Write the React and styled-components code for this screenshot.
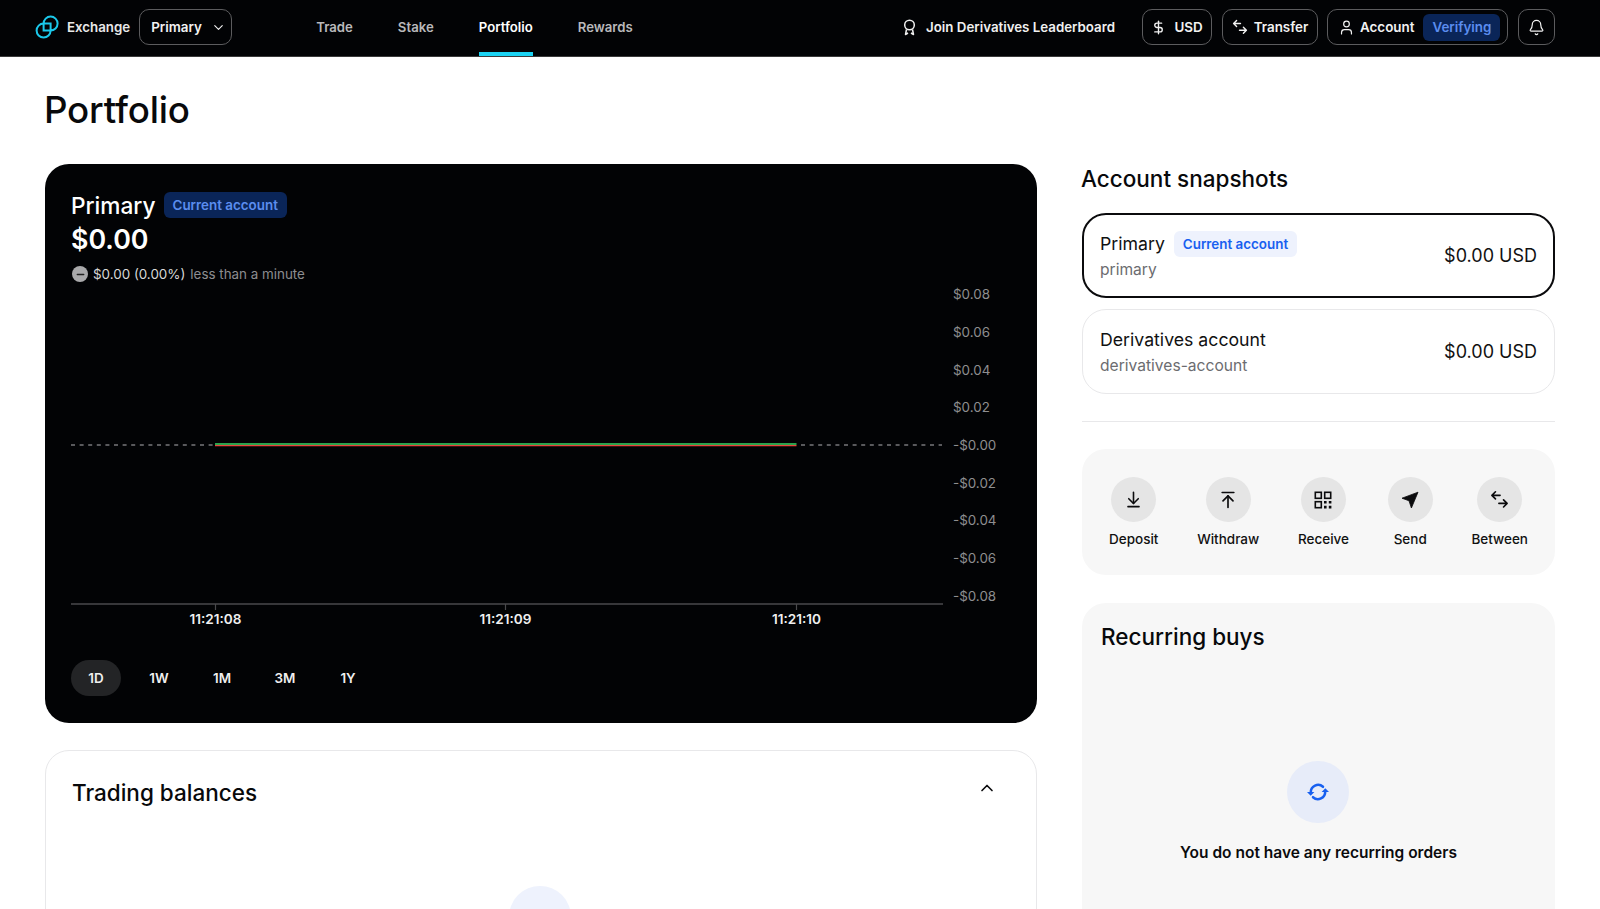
import React from 'react';
import styled, { createGlobalStyle } from 'styled-components';
import { ChevronDown, ChevronUp, Bell, User, DollarSign, ArrowDownToLine, ArrowUpToLine, Minus } from 'lucide-react';

const Global = createGlobalStyle`
  html, body { margin: 0; padding: 0; height: 100%; overflow: hidden; background: #fff; }
  body { font-family: Inter, "Liberation Sans", sans-serif; color: #0b0b0d; -webkit-font-smoothing: antialiased; }
  * { box-sizing: border-box; }
  svg { flex: none; }
`;

const Page = styled.div`height: 909px; overflow: hidden;`;
const Nav = styled.header`
  height: 57px; background: #020305; color: #fff; display: flex; align-items: stretch;
  justify-content: space-between; padding: 0 45px 0 35px; border-bottom: 1px solid #3a3a3a;
`;
const NavSide = styled.div`display: flex; align-items: center; padding-bottom: 2px;`;
const Brand = styled.div`display: flex; align-items: center; gap: 8px; font-size: 13.3px; font-weight: 600; color: #e8e8e8; margin-right: 9px;`;
const Outline = styled.button`
  height: 36px; padding: ${p => p.$pad || '0 10px'}; margin-left: ${p => p.$ml || '10px'}; background: transparent; color: #f2f2f2;
  border: 1px solid #5c5c5e; border-radius: 10px; display: flex; align-items: center; gap: ${p => p.$gap || '6px'};
  font: 600 13.4px Inter, sans-serif; width: ${p => p.$w || 'auto'}; justify-content: ${p => p.$jc || 'flex-start'};
`;
const Links = styled.nav`display: flex; gap: 45px; margin-left: 84px; align-self: stretch; margin-bottom: -2px;`;
const NavLink = styled.a`
  display: flex; align-items: center; font-size: 13.2px; font-weight: 600; padding-bottom: 2px;
  color: ${p => p.$active ? '#fff' : '#b9b9bb'}; position: relative;
  &::after { content: ''; display: ${p => p.$active ? 'block' : 'none'}; position: absolute; left: 0; right: 0; bottom: 0; height: 4px; background: #1bd3f3; }
`;
const Join = styled.div`display: flex; align-items: center; gap: 10px; font-size: 13.3px; font-weight: 600; color: #f0f0f0; margin-right: 17px;`;
const VerifyBadge = styled.span`
  height: 27px; padding: 0 9px; border-radius: 6px; background: #0a2558; color: #5b8def; display: flex; align-items: center; margin-left: 4px;
`;

const Main = styled.main`padding: 0 45px;`;
const Title = styled.h1`margin: 0 0 0 -1px; height: 107px; display: flex; align-items: center; font-size: 36.7px; font-weight: 500; letter-spacing: -0.2px; color: #08090b; padding-bottom: 2px;`;
const Columns = styled.div`display: grid; grid-template-columns: 992px 473px; gap: 45px;`;
const Col = styled.div`display: flex; flex-direction: column;`;

const ChartCard = styled.section`
  height: 559px; background: #020305; border-radius: 24px; color: #fff; padding: 27px 27px 27px 26px; display: flex; flex-direction: column;
`;
const NameRow = styled.div`display: flex; align-items: center; gap: 8px; height: 28px;`;
const CardName = styled.div`font-size: 22.7px; font-weight: 500;`;
const Badge = styled.span`
  height: 26px; padding: 0 9px; border-radius: 6px; display: inline-flex; align-items: center; font-size: 13.4px; font-weight: 600; white-space: nowrap;
  background: ${p => p.$dark ? '#0a2558' : '#eef2fd'}; color: ${p => p.$dark ? '#5b8def' : '#1860f0'};
`;
const Amount = styled.div`font-size: 26.8px; font-weight: 600; line-height: 34px; margin-top: 3px;`;
const Delta = styled.div`display: flex; align-items: center; font-size: 13.4px; margin-top: 9px; color: #d8d8d8; height: 18px;`;
const DeltaDot = styled.span`width: 16px; height: 16px; border-radius: 50%; background: #a9a9ab; color: #222; display: flex; align-items: center; justify-content: center; margin: 0 5px 0 1px;`;
const Muted = styled.span`color: #8d8d90; margin-left: 5px;`;
const ChartSvg = styled.svg`display: block; margin-top: 2px; flex: none;`;
const Ranges = styled.div`display: flex; gap: 13px; margin-top: auto;`;
const Range = styled.button`
  width: 50px; height: 36px; border: 0; border-radius: 18px; background: ${p => p.$active ? '#232426' : 'transparent'};
  color: #efefef; font: 600 13.4px Inter, sans-serif; padding: 0;
`;

const BalCard = styled.section`
  margin-top: 27px; height: 260px; border: 1px solid #e8e8ea; border-radius: 24px; padding: 27px 27px 27px 26px; position: relative;
`;
const BalHead = styled.div`display: flex; justify-content: space-between; align-items: flex-start; height: 30px;`;
const H2 = styled.h2`margin: 0; font-size: 22.5px; font-weight: 500; line-height: 30px; color: #08090b;`;
const BalCircle = styled.div`width: 62px; height: 62px; border-radius: 50%; background: #eef2fd; margin: 78px 0 0 437px;`;

const SnapTitle = styled.h2`margin: 0 0 0 -1px; height: 49px; font-size: 22.5px; font-weight: 500; line-height: 30px; color: #08090b;`;
const Acct = styled.div`
  height: 85px; margin-top: 11px; border-radius: 24px; display: flex; align-items: center; justify-content: space-between;
  border: ${p => p.$active ? '2px solid #0b0b0d' : '1px solid #e8e8ea'};
  padding-left: ${p => p.$active ? '16px' : '17px'}; padding-right: ${p => p.$active ? '16px' : '17px'};
  &:first-of-type { margin-top: 0; }
`;
const AcctRow = styled.div`display: flex; align-items: center; gap: 9px; height: 26px; font-size: 17.7px; color: #111;`;
const AcctSub = styled.div`font-size: 15.6px; color: #6c6c70; margin-top: 2px; line-height: 22px;`;
const AcctVal = styled.div`font-size: 18px; color: #111;`;
const Divider = styled.div`height: 1px; background: #e8e8ea; margin-top: 27px;`;
const Actions = styled.div`
  margin-top: 27px; height: 126px; background: #f7f7f7; border-radius: 24px; padding: 28px 27px 0; display: flex; justify-content: space-between;
`;
const Action = styled.div`display: flex; flex-direction: column; align-items: center; gap: 9px; font-size: 13.5px; font-weight: 500; color: #111; line-height: 17px;`;
const ActCircle = styled.div`width: 45px; height: 45px; border-radius: 50%; background: #e5e5e5; display: flex; align-items: center; justify-content: center; color: #0b0b0d;`;
const Recurring = styled.section`
  margin-top: 28px; height: 340px; background: #f7f7f7; border-radius: 24px; padding: 19px; display: flex; flex-direction: column; align-items: stretch;
`;
const RecCircle = styled.div`width: 62px; height: 62px; border-radius: 50%; background: #e7ecf9; margin: 109px 0 0 186px; display: flex; align-items: center; justify-content: center;`;
const RecText = styled.div`margin-top: 20px; font-size: 15.5px; font-weight: 600; text-align: center; color: #0b0b0d;`;

const Logo = () => (
  <svg width="24" height="24" viewBox="0 0 24 24" fill="none" stroke="#1bc8ea" strokeWidth="2">
    <path d="M8.6 8.6A7 7 0 1 1 15.6 15.6V8.6Z" />
    <path d="M8.6 8.6A7 7 0 1 0 15.6 15.6H8.6Z" />
  </svg>
);
const Swap = ({ size = 16 }) => (
  <svg width={size} height={size} viewBox="0 0 16 16" fill="none" stroke="currentColor" strokeWidth="1.4" strokeLinecap="round" strokeLinejoin="round">
    <path d="M8.5 5H1.8M4.6 2 1.6 5l3 3" transform="translate(0 -.5)" />
    <path d="M7.5 11h6.7M11.4 8l3 3-3 3" transform="translate(0 .3)" />
  </svg>
);
const Ribbon = () => (
  <svg width="13" height="17" viewBox="0 0 13 17" fill="none" stroke="#f0f0f0" strokeWidth="1.5">
    <circle cx="6.5" cy="6" r="4.8" />
    <path d="M3.5 10.5 2.5 15.5l2.5-1.5M9.5 10.5l1 5-2.5-1.5" strokeLinejoin="round" />
  </svg>
);
const Qr = () => (
  <svg width="18" height="18" viewBox="0 0 18 18" fill="none" stroke="#0b0b0d" strokeWidth="1.6">
    <rect x="1.3" y="1.3" width="6" height="6" />
    <rect x="10.7" y="1.3" width="6" height="6" />
    <rect x="1.3" y="10.7" width="6" height="6" />
    <path d="M10 10h2.6v2.6H10zM14.8 10h2.6v2.6h-2.6zM10 14.8h2.6v2.6H10zM14.8 14.8h2.6v2.6h-2.6z" fill="#0b0b0d" stroke="none" />
  </svg>
);
const SendIcon = () => (
  <svg width="18" height="18" viewBox="0 0 18 18" fill="#0b0b0d" stroke="#0b0b0d" strokeWidth="0.8" strokeLinejoin="round"><path d="M17 1.2 1 7.2 8 9.8 10.4 17Z" /></svg>
);
const Refresh = () => (
  <svg width="24" height="24" viewBox="0 0 24 24" fill="none" stroke="#1860f0" strokeWidth="2.5" strokeLinecap="round">
    <path d="M4.8 12.5A7.3 7.3 0 0 1 17 6.8" />
    <path d="M19.2 11.5A7.3 7.3 0 0 1 7 17.2" />
    <path d="M1 12h7.4l-3.7 3.8Z M23 12h-7.4l3.7-3.8Z" fill="#1860f0" stroke="none" />
  </svg>
);

const axis = ['$0.08', '$0.06', '$0.04', '$0.02', '-$0.00', '-$0.02', '-$0.04', '-$0.06', '-$0.08'];
const times = [['11:21:08', 144.5], ['11:21:09', 434.5], ['11:21:10', 725.5]];

const Chart = () => (
  <ChartSvg width="938" height="346" viewBox="0 0 938 346">
    <g fontFamily="Inter, sans-serif" fontSize="13.4" fill="#8e8e90">
      {axis.map((t, i) => <text key={t} x="882" y={9.3 + i * 37.65 + 5}>{t}</text>)}
    </g>
    <line x1="0" y1="160" x2="143" y2="160" stroke="#77777a" strokeWidth="1.3" strokeDasharray="4 4.6" />
    <line x1="730" y1="160" x2="871" y2="160" stroke="#77777a" strokeWidth="1.3" strokeDasharray="4 4.6" />
    <line x1="144" y1="158.9" x2="725.5" y2="158.9" stroke="#3bd864" strokeWidth="1.5" />
    <line x1="144" y1="160.6" x2="725.5" y2="160.6" stroke="#e8453c" strokeWidth="1.2" />
    <line x1="0" y1="319" x2="872" y2="319" stroke="#4a4a4c" strokeWidth="1.4" />
    {times.map(([t, x]) => (
      <g key={t}>
        <line x1={x} y1="319" x2={x} y2="325" stroke="#4a4a4c" strokeWidth="1.2" />
        <text x={x} y="339" textAnchor="middle" fontFamily="Inter, sans-serif" fontSize="13.6" fontWeight="600" fill="#efefef">{t}</text>
      </g>
    ))}
  </ChartSvg>
);

export default function App() {
  return (
    <Page>
      <Global />
      <Nav>
        <NavSide>
          <Brand><Logo />Exchange</Brand>
          <Outline $pad="0 7px 0 11px" $gap="9px" $w="93px" $jc="space-between" $ml="0">Primary<ChevronDown size={15} strokeWidth={1.8} /></Outline>
          <Links>
            <NavLink>Trade</NavLink>
            <NavLink>Stake</NavLink>
            <NavLink $active>Portfolio</NavLink>
            <NavLink>Rewards</NavLink>
          </Links>
        </NavSide>
        <NavSide>
          <Join><Ribbon />Join Derivatives Leaderboard</Join>
          <Outline $w="70px" $jc="center" $gap="8px"><DollarSign size={15} strokeWidth={2.2} />USD</Outline>
          <Outline $w="96px" $jc="center" $gap="6px"><Swap />Transfer</Outline>
          <Outline $w="181px" $ml="9px" $gap="5px" $pad="0 0 0 10px"><User size={17} strokeWidth={1.7} />Account<VerifyBadge>Verifying</VerifyBadge></Outline>
          <Outline $w="37px" $pad="0" $jc="center"><Bell size={17} strokeWidth={1.7} /></Outline>
        </NavSide>
      </Nav>
      <Main>
        <Title>Portfolio</Title>
        <Columns>
          <Col>
            <ChartCard>
              <NameRow><CardName>Primary</CardName><Badge $dark>Current account</Badge></NameRow>
              <Amount>$0.00</Amount>
              <Delta>
                <DeltaDot><Minus size={11} strokeWidth={3} /></DeltaDot>$0.00 (0.00%)<Muted>less than a minute</Muted>
              </Delta>
              <Chart />
              <Ranges>
                <Range $active>1D</Range><Range>1W</Range><Range>1M</Range><Range>3M</Range><Range>1Y</Range>
              </Ranges>
            </ChartCard>
            <BalCard>
              <BalHead>
                <H2>Trading balances</H2>
                <ChevronUp size={20} strokeWidth={2} style={{ marginRight: 12, marginTop: 0 }} />
              </BalHead>
              <BalCircle />
            </BalCard>
          </Col>
          <Col>
            <SnapTitle>Account snapshots</SnapTitle>
            <Acct $active>
              <div>
                <AcctRow>Primary<Badge>Current account</Badge></AcctRow>
                <AcctSub>primary</AcctSub>
              </div>
              <AcctVal>$0.00 USD</AcctVal>
            </Acct>
            <Acct>
              <div>
                <AcctRow>Derivatives account</AcctRow>
                <AcctSub>derivatives-account</AcctSub>
              </div>
              <AcctVal>$0.00 USD</AcctVal>
            </Acct>
            <Divider />
            <Actions>
              <Action><ActCircle><ArrowDownToLine size={19} strokeWidth={2} /></ActCircle>Deposit</Action>
              <Action><ActCircle><ArrowUpToLine size={20} strokeWidth={2} /></ActCircle>Withdraw</Action>
              <Action><ActCircle><Qr /></ActCircle>Receive</Action>
              <Action><ActCircle><SendIcon /></ActCircle>Send</Action>
              <Action><ActCircle><Swap size={19} /></ActCircle>Between</Action>
            </Actions>
            <Recurring>
              <H2>Recurring buys</H2>
              <RecCircle><Refresh /></RecCircle>
              <RecText>You do not have any recurring orders</RecText>
            </Recurring>
          </Col>
        </Columns>
      </Main>
    </Page>
  );
}
